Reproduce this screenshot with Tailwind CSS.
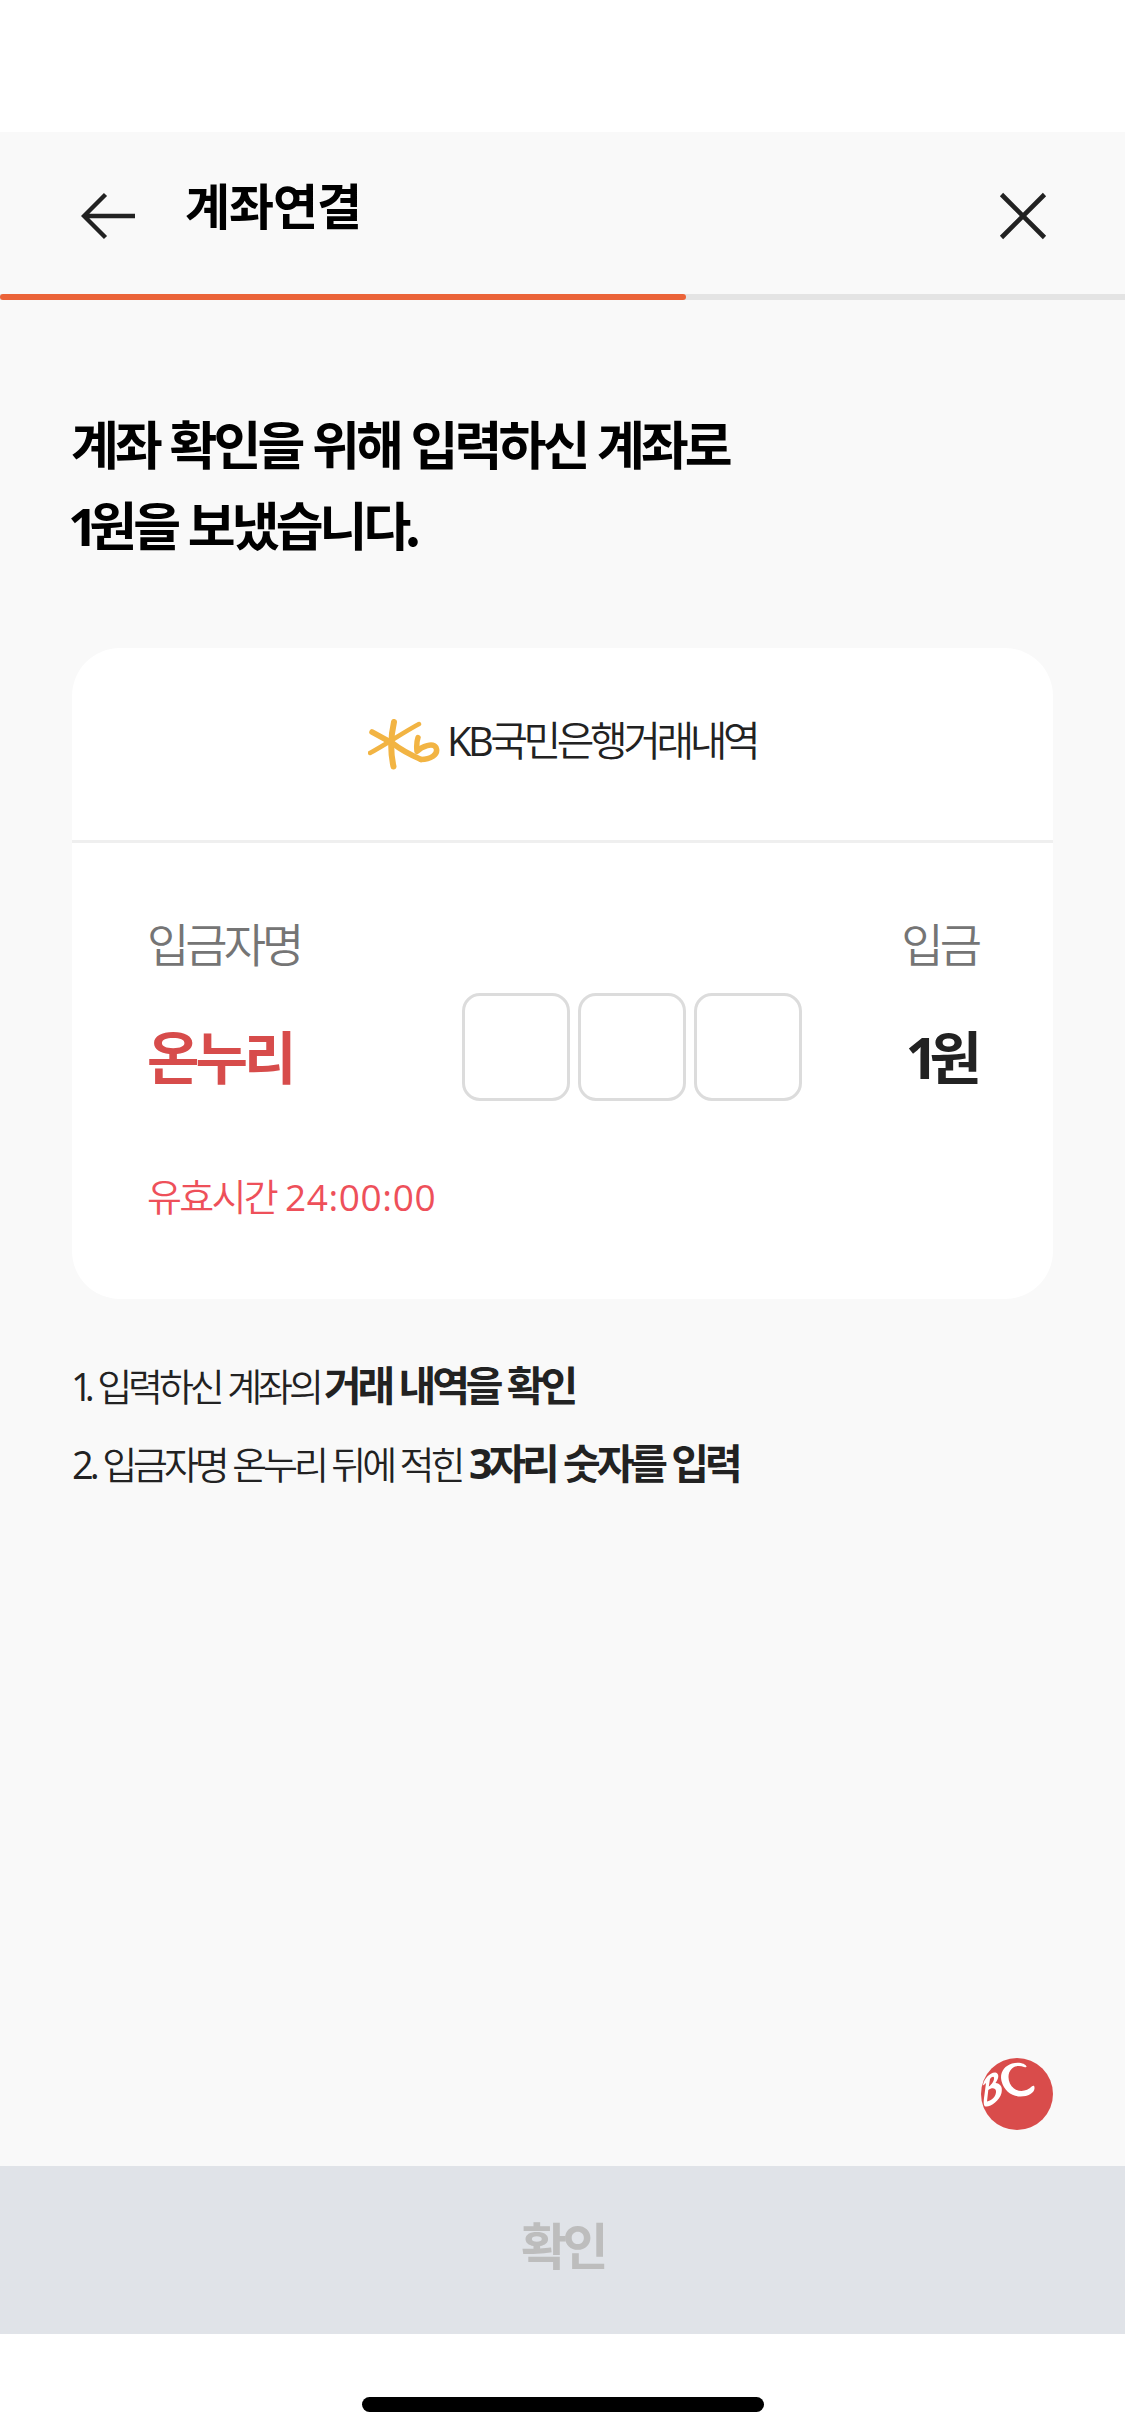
<!DOCTYPE html>
<html lang="ko">
<head>
<meta charset="utf-8">
<title>계좌연결</title>
<script src="https://cdn.jsdelivr.net/npm/@tailwindcss/browser@4"></script>
</head>
<body class="bg-white">
<div class="flex h-[2436px] w-[1125px] flex-col overflow-hidden bg-white pt-[132px] font-['Noto_Sans_CJK_KR',sans-serif] text-[#222]">
  <header class="flex h-[162px] shrink-0 items-start bg-[#f9f9f9] pr-[78px] pl-[81px]">
    <svg class="mt-[60px] h-[48px] w-[54px] shrink-0" viewBox="0 0 54 48" fill="none" stroke="#222" stroke-width="4.4"><path d="M24.500 2.500L3 24L24.500 45.500M3 24H54"/></svg>
    <h1 class="mt-[36px] ml-[50px] text-[49px] leading-[72px] font-bold tracking-[-1.100px] whitespace-nowrap text-black">계좌연결</h1>
    <svg class="mt-[60px] ml-auto h-[48px] w-[48px] shrink-0" viewBox="0 0 48 48" fill="none" stroke="#222" stroke-width="4.6"><path d="M2.500 2.500L45.500 45.500M45.500 2.500L2.500 45.500"/></svg>
  </header>
  <div class="h-[6px] shrink-0 bg-[#e4e4e4]"><div class="h-[6px] w-[686px] rounded-full bg-[#eb6338]"></div></div>
  <main class="flex h-[1866px] shrink-0 flex-col bg-[#f9f9f9] px-[72px]">
    <h2 class="-ml-px mt-[102px] h-[162px] text-[52px] leading-[81px] font-bold tracking-[-3.900px] whitespace-nowrap text-black">계좌 확인을 위해 입력하신 계좌로<br><span class="-ml-[3px] font-['Open_Sans'] leading-none tracking-[-8.500px]">1</span>원을 보냈습니다<span class="-ml-[3px]">.</span></h2>
    <section class="mt-[84px] h-[651px] shrink-0 rounded-[48px] bg-white">
      <div class="flex h-[195px] items-start border-b-[3px] border-[#efefef] pt-[71px] pl-[296px]">
        <svg class="h-[51px] w-[72px] shrink-0" viewBox="0 0 72 51" fill="none" stroke="#f2b443" stroke-linecap="round" stroke-linejoin="round"><path stroke-width="6" d="M26 3C22.500 18 22.500 34 25.500 47.500"/><path stroke-width="5.500" d="M4 13L25 24.500C33 31 43 36 53 40.500"/><path stroke-width="4.500" d="M51 5C36 13 17 26 2 34"/><path stroke-width="5.500" d="M50 18.500C48.500 23 48.500 28 49 32.500C54 27 65 23.500 68 28.500C71 36 62 40.500 53 40.500"/></svg>
        <span class="-mt-[11px] ml-[7px] text-[41px] leading-[60px] font-[350] tracking-[-4.500px] whitespace-nowrap"><span class="font-['Open_Sans'] text-[40px] leading-none font-normal tracking-[-3.500px]">KB</span>국민은행거래내역</span>
      </div>
      <div class="px-[75px] pt-[65px]">
        <div class="flex justify-between text-[46px] leading-[68px] font-[350] tracking-[-4px] whitespace-nowrap text-[#757575]"><span>입금자명</span><span>입금</span></div>
        <div class="mt-[17px] flex h-[108px] items-center whitespace-nowrap">
          <span class="w-[315px] pt-[14px] text-[57px] leading-[84px] font-bold tracking-[-4px] text-[#d74c4b]">온누리</span>
          <div class="flex gap-[8px]">
            <div class="size-[108px] rounded-[18px] border-[3px] border-[#dcdcdc]"></div>
            <div class="size-[108px] rounded-[18px] border-[3px] border-[#dcdcdc]"></div>
            <div class="size-[108px] rounded-[18px] border-[3px] border-[#dcdcdc]"></div>
          </div>
          <span class="ml-auto pt-[14px] text-[57px] leading-[84px] font-bold tracking-[-4px]"><span class="font-['Open_Sans'] leading-none tracking-[-8.500px]">1</span>원</span>
        </div>
        <div class="mt-[66px] text-[38px] leading-[56px] font-[350] tracking-[-2.700px] whitespace-nowrap text-[#ee505a]">유효시간 <span class="ml-[1px] font-['Open_Sans'] text-[37px] leading-none font-normal tracking-[0.600px]">24:00:00</span></div>
      </div>
    </section>
    <ol class="mt-[45px] text-[38px] leading-[78px] font-[350] tracking-[-4.100px] whitespace-nowrap">
      <li class="flex h-[78px] items-baseline"><span class="w-[252px]"><span class="-ml-[1px] font-['Open_Sans'] leading-none font-normal tracking-[-8px]">1</span><span class="font-['Open_Sans'] leading-none font-normal tracking-[-4px]">.</span> 입력하신 계좌의</span><b class="text-[41px] font-bold">거래 내역을 확인</b></li>
      <li class="flex h-[78px] items-baseline"><span class="w-[397px]"><span class="font-['Open_Sans'] leading-none font-normal tracking-[-4px]">2.</span> 입금자명 온누리 뒤에 적힌</span><b class="text-[41px] font-bold tracking-[-4.100px]"><span class="font-['Open_Sans'] leading-none tracking-[-4px]">3</span>자리 숫자를 입력</b></li>
    </ol>
    <svg class="mt-auto mb-[36px] size-[72px] shrink-0 self-end" viewBox="0 0 72 72"><circle cx="36" cy="36" r="36" fill="#d94c4b"/><path fill="#fff" d="M45.500 8.500C44.500 5.500 38 3.500 31 5.500C23 8 18.500 15 20.500 23C23 33 31 38.500 39.500 38.500C47 38.500 53 35 53.500 30.500C53.700 27.500 52.500 27.300 51 28.300C46 33.500 38.500 34.500 33 30.500C27 26 25.500 16 30.500 11C34 7.500 39 7.500 43 9C44.500 9.500 46 9.500 45.500 8.500Z"/><path fill="#fff" fill-rule="evenodd" d="M2 27C3 21 9 14 14.500 14.500C18.500 15.500 18 20.500 14.500 25C19 25.500 22 28.500 20.500 35C18.500 43 9 49.500 4.500 48.500C2.500 48 2.500 44 3 40L5 25C3.500 26 2.500 28 2 27ZM9 21L7.800 28.500C11 26.500 13.500 22 13 19.500C12.500 18 10.500 19 9 21ZM7.300 32L6 43.500C10.500 43 15.500 38 15 33C14.500 29.500 10.500 29.500 7.300 32Z"/></svg>
  </main>
  <button class="flex h-[168px] shrink-0 items-start justify-center bg-[#e0e3e8] pt-[40px] text-[50px] leading-[74px] font-bold tracking-[-4.500px] text-[#bdbdbd]">확인</button>
  <div class="mt-[63px] ml-[362px] h-[15px] w-[402px] shrink-0 rounded-full bg-black"></div>
</div>
</body>
</html>
